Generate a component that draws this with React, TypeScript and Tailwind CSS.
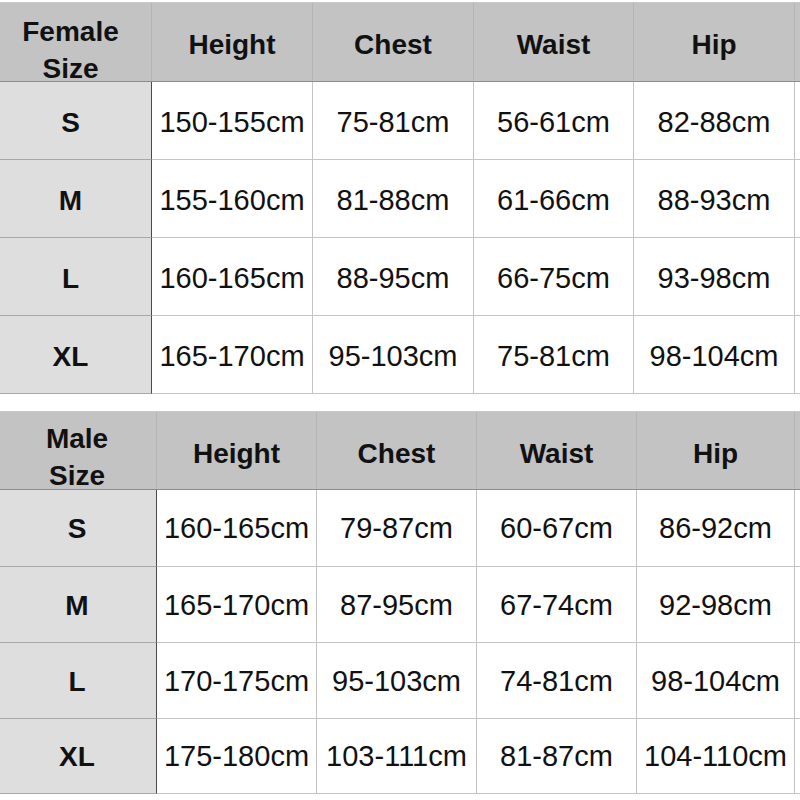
const font = { fontFamily: '"Liberation Sans", Arial, sans-serif' };

type Table = {
  label: [string, string];
  widths: string[];
  headH: string;
  rowH: string[];
  firstPad: string;
  labelPad: string;
  cellPad: string;
  rows: string[][];
};

const tables: Table[] = [
  {
    label: ["Female", "Size"],
    widths: ["w-[152px]", "w-[161px]", "w-[161px]", "w-[160px]", "w-[161px]"],
    headH: "h-[79px]",
    rowH: ["h-[78px]", "h-[78px]", "h-[78px]", "h-[78px]"],
    firstPad: "pr-[10px]",
    labelPad: "pt-[16px]",
    cellPad: "pt-[5px]",
    rows: [
      ["S", "150-155cm", "75-81cm", "56-61cm", "82-88cm"],
      ["M", "155-160cm", "81-88cm", "61-66cm", "88-93cm"],
      ["L", "160-165cm", "88-95cm", "66-75cm", "93-98cm"],
      ["XL", "165-170cm", "95-103cm", "75-81cm", "98-104cm"],
    ],
  },
  {
    label: ["Male", "Size"],
    widths: ["w-[157px]", "w-[160px]", "w-[160px]", "w-[160px]", "w-[158px]"],
    headH: "h-[78px]",
    rowH: ["h-[77px]", "h-[76px]", "h-[76px]", "h-[75px]"],
    firstPad: "pr-[2px]",
    labelPad: "pt-[12px]",
    cellPad: "pt-[2px]",
    rows: [
      ["S", "160-165cm", "79-87cm", "60-67cm", "86-92cm"],
      ["M", "165-170cm", "87-95cm", "67-74cm", "92-98cm"],
      ["L", "170-175cm", "95-103cm", "74-81cm", "98-104cm"],
      ["XL", "175-180cm", "103-111cm", "81-87cm", "104-110cm"],
    ],
  },
];

const heads = ["Height", "Chest", "Waist", "Hip"];

function SizeTable({ t }: { t: Table }) {
  return (
    <div className="border-t border-[#c8c8c8]">
      {/* header */}
      <div className={`flex ${t.headH} bg-[#c3c3c3] border-b border-[#8c8c8c]`}>
        <div
          className={`${t.widths[0]} shrink-0 border-r border-[#b4b4b4] flex flex-col items-center justify-center ${t.labelPad} ${t.firstPad} text-[28px] font-bold leading-[37px] text-[#111]`}
        >
          <span>{t.label[0]}</span>
          <span>{t.label[1]}</span>
        </div>
        {heads.map((h, i) => (
          <div
            key={h}
            className={`${t.widths[i + 1]} shrink-0 border-r border-[#b4b4b4] flex items-center justify-center pt-[6px] text-[28px] font-bold text-[#111]`}
          >
            {h}
          </div>
        ))}
        <div className="flex-1" />
      </div>
      {/* rows */}
      {t.rows.map((r, ri) => (
        <div key={ri} className={`flex ${t.rowH[ri]}`}>
          <div
            className={`${t.widths[0]} shrink-0 bg-[#dedede] border-r border-b border-r-[#4a4a4a] border-b-[#a8a8a8] flex items-center justify-center ${t.cellPad} ${t.firstPad} text-[28px] font-bold text-[#111]`}
          >
            {r[0]}
          </div>
          {r.slice(1).map((c, ci) => (
            <div
              key={ci}
              className={`${t.widths[ci + 1]} shrink-0 bg-white border-r border-b border-[#c4c4c4] flex items-center justify-center ${t.cellPad} text-[29px] text-[#111]`}
            >
              {c}
            </div>
          ))}
          <div className="flex-1 border-b border-[#c4c4c4]" />
        </div>
      ))}
    </div>
  );
}

export default function App() {
  return (
    <div className="w-[800px] h-[800px] bg-white overflow-hidden" style={font}>
      <div className="pt-[2px]">
        <SizeTable t={tables[0]} />
      </div>
      <div className="pt-[17px]">
        <SizeTable t={tables[1]} />
      </div>
    </div>
  );
}
